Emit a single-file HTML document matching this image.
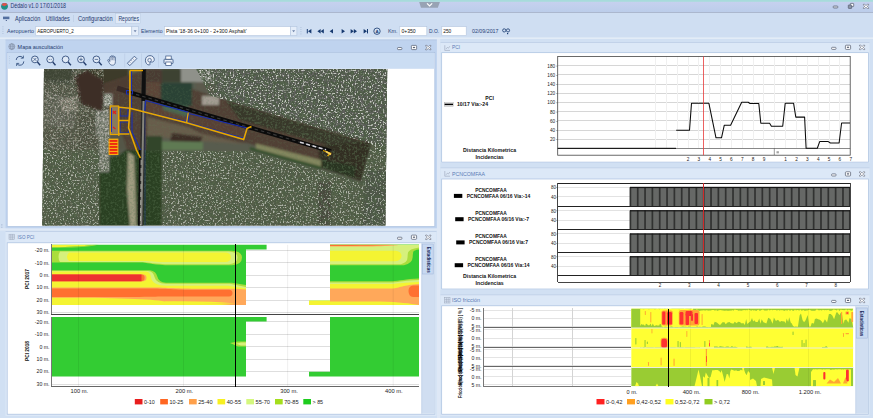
<!DOCTYPE html><html><head><meta charset="utf-8"><title>Dédalo v1.0 17/01/2018</title>
<style>html,body{margin:0;padding:0;background:#d3e1f3;overflow:hidden}svg{display:block}text{font-family:"Liberation Sans", sans-serif}</style></head><body>
<svg width="873" height="418" viewBox="0 0 873 418">
<rect x="0" y="0" width="873" height="418" fill="#d1e0f3"/>
<rect x="0" y="0" width="873" height="1.900" fill="#a7dbdb"/>
<defs><linearGradient id="tg" x1="0" y1="0" x2="0" y2="1"><stop offset="0" stop-color="#c6d1ef"/><stop offset="1" stop-color="#bbcdea"/></linearGradient></defs>
<rect x="0" y="1.9" width="873" height="10.4" fill="url(#tg)"/>
<rect x="0" y="12" width="873" height="0.9" fill="#a3afc6"/>
<rect x="0" y="12.9" width="873" height="25.100" fill="#cfdef2"/>
<rect x="0" y="37.6" width="873" height="1" fill="#eef4fb"/>
<circle cx="4.5" cy="6.3" r="3.4" fill="#1f8f86"/><path d="M1.5 5 A3.4 3.4 0 0 1 7.6 4.6 L4.5 6.3Z" fill="#e0504a"/>
<text x="10.5" y="8.3" font-size="6.9" fill="#1e3a6e" textLength="55.5" lengthAdjust="spacingAndGlyphs">Dédalo v1.0 17/01/2018</text>
<path d="M419.2 2 L439.9 2 L437.8 7.7 L421 7.7 Z" fill="#98a3b4"/><path d="M427 3.300 L429.600 5.900 L432.200 3.300" fill="none" stroke="#fff" stroke-width="1.200"/>
<rect x="3" y="16.6" width="6.4" height="2.6" fill="#5470a0"/><rect x="5.8" y="20" width="1" height="1" fill="#3a5080"/>
<rect x="115.5" y="13.6" width="25" height="10" fill="#dfe9f7" stroke="#b8c9e2" stroke-width="0.5"/>
<text x="15.1" y="20.9" font-size="6.8" fill="#1e3a6e" textLength="25.2" lengthAdjust="spacingAndGlyphs">Aplicación</text>
<text x="45.8" y="20.9" font-size="6.8" fill="#1e3a6e" textLength="24" lengthAdjust="spacingAndGlyphs">Utilidades</text>
<text x="78" y="20.9" font-size="6.8" fill="#1e3a6e" textLength="34.6" lengthAdjust="spacingAndGlyphs">Configuración</text>
<text x="118.4" y="20.9" font-size="6.8" fill="#1e3a6e" textLength="20.6" lengthAdjust="spacingAndGlyphs">Reportes</text>
<rect x="73.3" y="15" width="0.5" height="7" fill="#b5c6de"/>
<rect x="2.6" y="26.5" width="0.7" height="0.7" fill="#8fa3c4"/>
<rect x="2.6" y="28.7" width="0.7" height="0.7" fill="#8fa3c4"/>
<rect x="2.6" y="30.9" width="0.7" height="0.7" fill="#8fa3c4"/>
<rect x="2.6" y="33.1" width="0.7" height="0.7" fill="#8fa3c4"/>
<text x="7" y="33.4" font-size="6.1" fill="#2b4478" textLength="27" lengthAdjust="spacingAndGlyphs">Aeropuerto</text>
<rect x="35.8" y="26.6" width="96" height="9" fill="#fff" stroke="#b4c5de" stroke-width="0.6"/>
<rect x="131.8" y="26.6" width="6.6" height="9" fill="#e4edf9" stroke="#b4c5de" stroke-width="0.6"/><path d="M133.6 30.2 L136.6 30.2 L135.1 32.2Z" fill="#6f83a8"/>
<text x="37.3" y="33.3" font-size="6" fill="#111" textLength="36.5" lengthAdjust="spacingAndGlyphs">AEROPUERTO_2</text>
<text x="141" y="33.4" font-size="6.1" fill="#2b4478" textLength="21.5" lengthAdjust="spacingAndGlyphs">Elemento</text>
<rect x="164.3" y="26.6" width="126" height="9" fill="#fff" stroke="#b4c5de" stroke-width="0.6"/>
<rect x="290.3" y="26.6" width="6.6" height="9" fill="#e4edf9" stroke="#b4c5de" stroke-width="0.6"/><path d="M292.1 30.2 L295.1 30.2 L293.6 32.2Z" fill="#6f83a8"/>
<text x="166" y="33.3" font-size="5.900" fill="#111" textLength="80.7" lengthAdjust="spacingAndGlyphs">Pista '18-36 0+100 - 2+300 Asphalt'</text>
<rect x="300.6" y="27.0" width="0.7" height="0.7" fill="#8fa3c4"/>
<rect x="300.6" y="29.2" width="0.7" height="0.7" fill="#8fa3c4"/>
<rect x="300.6" y="31.4" width="0.7" height="0.7" fill="#8fa3c4"/>
<rect x="300.6" y="33.6" width="0.7" height="0.7" fill="#8fa3c4"/>
<g fill="#16396f">
<rect x="306.8" y="29" width="1" height="4.4"/><path d="M311.4 29 L311.4 33.4 L308 31.2Z"/>
<path d="M320.6 29 L320.6 33.4 L317.4 31.2Z"/><path d="M323.8 29 L323.8 33.4 L320.6 31.2Z"/>
<path d="M333 29 L333 33.4 L329.6 31.2Z"/>
<path d="M341.6 29 L341.6 33.4 L345 31.2Z"/>
<path d="M350.6 29 L350.6 33.4 L353.8 31.2Z"/><path d="M353.8 29 L353.8 33.4 L357 31.2Z"/>
<path d="M363.6 29 L363.6 33.4 L367 31.2Z"/><rect x="367" y="29" width="1" height="4.4"/>
</g>
<circle cx="377" cy="31.2" r="3.2" fill="none" stroke="#16396f" stroke-width="0.8"/><text x="377" y="33" font-size="4.4" font-weight="bold" text-anchor="middle" fill="#16396f">A</text>
<text x="388" y="33.4" font-size="6.1" fill="#2b4478" textLength="9.6" lengthAdjust="spacingAndGlyphs">Km.</text>
<rect x="399.8" y="26.6" width="27" height="9" fill="#fff" stroke="#b4c5de" stroke-width="0.6"/><text x="401.4" y="33.3" font-size="6" fill="#111" textLength="14.3" lengthAdjust="spacingAndGlyphs">0+350</text>
<text x="429" y="33.4" font-size="6.1" fill="#2b4478" textLength="10.2" lengthAdjust="spacingAndGlyphs">D.O.</text>
<rect x="441.8" y="26.6" width="24.4" height="9" fill="#fff" stroke="#b4c5de" stroke-width="0.6"/><text x="443.2" y="33.3" font-size="6" fill="#111" textLength="8.1" lengthAdjust="spacingAndGlyphs">250</text>
<text x="472" y="33.3" font-size="6" fill="#2b4478" textLength="26.5" lengthAdjust="spacingAndGlyphs">02/09/2017</text>
<g fill="none" stroke="#16396f" stroke-width="0.8"><circle cx="504.2" cy="30.4" r="1.6"/><circle cx="508" cy="30.4" r="1.6"/></g><rect x="507" y="33" width="1.2" height="1.2" fill="#16396f"/>
<g fill="#fff" stroke="#5a6274" stroke-width="0.75">
<rect x="833.2" y="6" width="4.600" height="2" rx="0.700" fill="#d8dde6"/>
<rect x="850.3" y="3.4" width="3.4" height="3.2" rx="0.5"/><rect x="848.300" y="5" width="3.400" height="3.400" rx="0.500" fill="#8d96a8"/>
<path d="M863.4 4.3l1.1 0 1.5 1.2 1.5-1.2 1.1 0 0 0.9-1.5 1.2 1.5 1.200 0 0.900-1.100 0-1.500-1.200-1.500 1.200-1.100 0 0-0.900 1.500-1.200-1.500-1.200z" stroke-width="0.600"/>
</g>
<rect x="437" y="39" width="3.2" height="379" fill="#dee8f6"/><rect x="0" y="228.2" width="437" height="2.4" fill="#dee8f6"/>
<rect x="5.5" y="39.7" width="431.3" height="188.5" fill="#bfd3ef"/>
<rect x="5.5" y="39.7" width="431.3" height="0.7" fill="#b7c9e3"/>
<text x="17.6" y="48.6" font-size="6.2" fill="#1e3a6e" textLength="45.4" lengthAdjust="spacingAndGlyphs">Mapa auscultación</text>
<rect x="7.2" y="52.6" width="427.6" height="174" fill="#fff" stroke="#a9bfdf" stroke-width="0.7"/>
<rect x="7.6" y="53" width="426.8" height="15.8" fill="#cbddf3"/>
<g fill="none" stroke="#7d8aa0" stroke-width="0.6"><circle cx="11.8" cy="46.6" r="3"/><ellipse cx="11.8" cy="46.6" rx="1.3" ry="3"/><path d="M8.8 46.6h6M9.3 45h5M9.3 48.2h5"/></g>
<g fill="#fff" stroke="#5a6274" stroke-width="0.75">
<rect x="397.50" y="47.50" width="4.4" height="2.1" rx="0.7"/>
<rect x="411.40" y="45.40" width="5.2" height="4.2" rx="0.8"/><rect x="412.90" y="46.90" width="2.2" height="1.2" fill="#5a6274" stroke="none"/>
<path d="M425.70 45.40l1.1 0 1.5 1.3 1.5-1.3 1.1 0 0 0.9-1.5 1.3 1.5 1.3 0 0.9-1.1 0-1.5-1.3-1.5 1.3-1.1 0 0-0.9 1.5-1.3-1.5-1.3z" stroke-width="0.6"/>
</g>
<g fill="none" stroke="#34507f" stroke-width="0.9">
<rect x="9.4" y="56.0" width="0.5" height="0.5" fill="#8fa3c4" stroke="none"/>
<rect x="9.4" y="58.3" width="0.5" height="0.5" fill="#8fa3c4" stroke="none"/>
<rect x="9.4" y="60.6" width="0.5" height="0.5" fill="#8fa3c4" stroke="none"/>
<rect x="9.4" y="62.9" width="0.5" height="0.5" fill="#8fa3c4" stroke="none"/>
<path d="M16.2 60a3.800 3.800 0 0 1 6.800-2.200M23.800 61.400a3.800 3.800 0 0 1-6.800 2.400"/><path d="M23.400 55.600v2.600h-2.600M16.600 66v-2.600h2.600" stroke-width="0.8"/>
<circle cx="34.9" cy="59.400" r="3.400" fill="#dfe9f6"/><path d="M37.4 62l2.800 3.200" stroke-width="1.400" stroke="#27406f"/>
<circle cx="50.2" cy="59.400" r="3.400" fill="#dfe9f6"/><path d="M52.7 62l2.800 3.200" stroke-width="1.400" stroke="#27406f"/>
<circle cx="65.6" cy="59.400" r="3.400" fill="#dfe9f6"/><path d="M68.1 62l2.800 3.200" stroke-width="1.400" stroke="#27406f"/>
<circle cx="81" cy="59.400" r="3.400" fill="#dfe9f6"/><path d="M83.5 62l2.800 3.200" stroke-width="1.400" stroke="#27406f"/>
<circle cx="96.4" cy="59.400" r="3.400" fill="#dfe9f6"/><path d="M98.9 62l2.800 3.200" stroke-width="1.400" stroke="#27406f"/>
<path d="M33.400 57.900l3 3M36.400 57.900l-3 3" stroke-width="0.7"/>
<path d="M48.800 59.400h0.800M50.800 59.400h0.800" stroke-width="0.9"/>
<path d="M79.300 59.400h3.400M81 57.700v3.400" stroke-width="0.7"/>
<path d="M94.700 59.400h3.400" stroke-width="0.7"/>
<path d="M109.800 61.500v-4.200a0.700 0.700 0 0 1 1.400 0v-1a0.700 0.700 0 0 1 1.400 0v0.300a0.700 0.700 0 0 1 1.400 0v0.800a0.700 0.700 0 0 1 1.400 0v4.200c0 2.600-1.200 3.600-3 3.600s-2.400-0.800-3.400-2.600l-1.300-2.300a0.700 0.700 0 0 1 1.200-0.600z" stroke-width="0.7" fill="#e8eef8"/>
<path d="M111.200 57.300v3M112.600 56.600v3.600M114 57v3.400" stroke-width="0.5"/>
<rect x="124.600" y="53.500" width="0.500" height="14" fill="#b3c5df" stroke="none"/>
<path d="M127.400 63.200l7-7 2.400 2.400-7 7z" stroke-width="0.8" fill="#e8eef8"/><path d="M129.400 61.800l1 1M131 60.200l1 1M132.600 58.600l1 1" stroke-width="0.5"/>
<rect x="141.300" y="53.500" width="0.500" height="14" fill="#b3c5df" stroke="none"/>
<path d="M150 55.600c-2.800 0-4.600 2-4.600 4.600 0 2.600 1.600 4.800 3.700 4.800 1 0 1-0.800 0.800-1.600-0.200-1 0.600-1.600 1.600-1.400 1.600 0.300 2.800-0.800 2.800-2.500 0-2.200-1.900-3.900-4.300-3.900z" stroke-width="0.8" fill="#e8eef8"/><circle cx="149.600" cy="60.200" r="1.800" stroke-width="0.7"/>
<rect x="158.300" y="53.500" width="0.500" height="14" fill="#b3c5df" stroke="none"/>
<rect x="164" y="59.200" width="9" height="4.400" rx="0.700" stroke-width="0.8" fill="#e8eef8"/><rect x="165.800" y="56" width="5.400" height="3.200" stroke-width="0.700" fill="#fff"/><rect x="165.800" y="62" width="5.400" height="3.400" fill="#fff" stroke-width="0.700"/>
</g>
<defs>
<clipPath id="mapclip"><path d="M44 69H387.200L385.400 225.500H42.200Z"/></clipPath>
<filter id="nzW" x="0" y="0" width="100%" height="100%"><feTurbulence type="fractalNoise" baseFrequency="0.6" numOctaves="2" seed="3"/><feColorMatrix values="0 0 0 0 0.88  0 0 0 0 0.88  0 0 0 0 0.85  6 0 0 0 -3.3"/></filter>
<filter id="nzB" x="0" y="0" width="100%" height="100%"><feTurbulence type="fractalNoise" baseFrequency="0.55" numOctaves="2" seed="8"/><feColorMatrix values="0 0 0 0 0.07  0 0 0 0 0.1  0 0 0 0 0.06  0 6 0 0 -2.6"/></filter>
<filter id="nzG" x="0" y="0" width="100%" height="100%"><feTurbulence type="fractalNoise" baseFrequency="0.45" numOctaves="2" seed="5"/><feColorMatrix values="0 0 0 0 0.12  0 0 0 0 0.2  0 0 0 0 0.1  0 0 4 0 -1.8"/></filter>
<filter id="nzL" x="0" y="0" width="100%" height="100%"><feTurbulence type="fractalNoise" baseFrequency="0.4" numOctaves="2" seed="15"/><feColorMatrix values="0 0 0 0 0.75  0 0 0 0 0.72  0 0 0 0 0.6  0 0 4 0 -2.0"/></filter>
<filter id="nzD" x="0" y="0" width="100%" height="100%"><feTurbulence type="fractalNoise" baseFrequency="0.22" numOctaves="2" seed="21"/><feColorMatrix values="0 0 0 0 0.08  0 0 0 0 0.13  0 0 0 0 0.06  6 0 0 0 -2.7"/></filter>
<filter id="blur1"><feGaussianBlur stdDeviation="1.1"/></filter>
<filter id="blur2"><feGaussianBlur stdDeviation="0.5"/></filter>
<clipPath id="urbN"><path d="M196 69H388V160L370 143.500L210 95.500Z"/></clipPath>
<clipPath id="urbS"><path d="M42 150H99V226H42ZM162 151L250 151L320 170L361 182L372 142L388 150V226H162Z"/></clipPath>
<clipPath id="urbW"><path d="M42 69H104V94H112V106H109V172H99V150H42Z"/></clipPath>
<clipPath id="forest"><path d="M99 172L104 158L118 156L126 150L162 150V226H99ZM226 101L371 144L368 158L330 146L240 120ZM322 150L370 146L366 178H322Z"/></clipPath>
<clipPath id="airp"><path d="M104 84L128 76L146 69L160 69L160 82L195 90L210 95L371 142L361 181L320 167L248 143L150 136L146 152L128 152L120 128L108 126Z"/></clipPath>
</defs>
<g clip-path="url(#mapclip)">
<rect x="40" y="68" width="350" height="160" fill="#585c4e"/>
<g filter="url(#blur1)">
<path d="M42 69H128V150H42Z" fill="#545647"/>
<path d="M44 69H74L72 84L44 82Z" fill="#42463a"/>
<path d="M74 76L86 70L104 82L102 112L80 104Z" fill="#3e2f27"/>
<path d="M86 69H128V78L104 84Z" fill="#3d3a2c"/>
<path d="M46 92L78 100L74 128L44 126Z" fill="#66655a"/>
<path d="M60 100L76 96L78 110L62 112Z" fill="#8a8478"/>
<path d="M78 112L100 116V150H78Z" fill="#50503f"/>
<path d="M196 66H390V158L370 143.500L210 95.500Z" fill="#5f615b"/>
<path d="M180 66H212V82H180Z" fill="#8f918a"/>
<path d="M196 82H215V94L196 90Z" fill="#5b5a4e"/>
<path d="M104 84L128 76L146 69L160 69L160 82L195 90L210 95L371 142L361 181L320 167L248 143L150 136L146 152L128 152L120 128L108 126Z" fill="#513f34"/>
<path d="M145.800 100.500L188 112.200L186 121.600L144.600 112Z" fill="#5c4336"/>
<path d="M189 113.500L246.800 128L243.700 138.200L188 122.600Z" fill="#584035"/>
<path d="M226 101L371 144L368 158L330 146L240 120Z" fill="#37382a"/>
<path d="M161 82.500H192V106H161Z" fill="#2c4235"/>
<path d="M163 106H188V117L163 110Z" fill="#486650"/>
<path d="M146 70H162V84H146Z" fill="#4a3a30"/><path d="M162 69H181V82H162Z" fill="#3c4232"/>
<path d="M146 82H160V98L146 94Z" fill="#5b4538"/>
<path d="M147 117L188 127L200 133L246 144L200 141L147 136Z" fill="#685d4b"/>
<path d="M172 133L203 137L200 142L170 141Z" fill="#3d2d27"/>
<path d="M318 146L371 142L361 181L320 167Z" fill="#332d23"/>
<path d="M322 160L356 166L354 178L322 168Z" fill="#2b3421"/>
<path d="M147 141L203 142L203 150L147 150Z" fill="#5f7a52"/>
<path d="M256 143.500L321 160V166.500L256 148.500Z" fill="#84875f"/>
<path d="M250 147L321 166.500L321 169.500L250 150Z" fill="#33502c"/>
<path d="M99 172L104 158L118 156L126 150L162 150V226H99Z" fill="#2b3f23"/>
<path d="M85 152H100V172H85Z" fill="#3a5030"/>
<path d="M146 136H162V152H146Z" fill="#33452a"/>
<path d="M128 152L134 156L135.500 190L136.500 226H130L127 190Z" fill="#a09c80"/>
<path d="M42 150H99V226H42Z" fill="#59604c"/>
<path d="M162 151L250 151L320 170L361 182L372 142L388 150V226H162Z" fill="#58614c"/>
<path d="M318 182H331V226H318Z" fill="#4a473e"/>
<path d="M366 170H388V226H362Z" fill="#50544a"/>
<path d="M104 94H112V106H104Z" fill="#a8a9a0"/>
<path d="M96 110H109V136H96Z" fill="#8c8d84"/>
<path d="M99 136H109V172H99Z" fill="#85887d"/>
<path d="M202 96H219V105H202Z" fill="#a39c92"/>
</g>
<g clip-path="url(#forest)"><rect x="40" y="68" width="350" height="160" filter="url(#nzG)" opacity="0.32"/></g>
<g clip-path="url(#airp)"><rect x="100" y="68" width="280" height="115" filter="url(#nzG)" opacity="0.18"/></g>
<g clip-path="url(#urbN)"><rect x="190" y="66" width="200" height="100" filter="url(#nzD)" opacity="0.7"/></g>
<g clip-path="url(#urbS)"><rect x="40" y="148" width="350" height="80" filter="url(#nzD)" opacity="0.6"/></g>
<g clip-path="url(#urbN)"><rect x="190" y="66" width="200" height="100" filter="url(#nzB)" opacity="0.95"/><rect x="190" y="66" width="200" height="100" filter="url(#nzW)" opacity="0.72"/></g>
<g clip-path="url(#urbS)"><rect x="40" y="148" width="350" height="80" filter="url(#nzB)" opacity="0.7"/><rect x="40" y="148" width="350" height="80" filter="url(#nzW)" opacity="0.58"/></g>
<g clip-path="url(#urbW)"><rect x="40" y="68" width="80" height="106" filter="url(#nzB)" opacity="0.6"/><rect x="40" y="68" width="80" height="106" filter="url(#nzW)" opacity="0.4"/><rect x="40" y="68" width="80" height="106" filter="url(#nzL)" opacity="0.35"/></g>
<g filter="url(#blur1)"><path d="M76 78L87 71L103 80L102 111L82 103Z" fill="#3e2f27"/>
<path d="M104 84L118 80L128 76V88L118 86L104 92Z" fill="#4e3d33"/>
<path d="M44 69H72L70 80L44 80Z" fill="#3f4435" opacity="0.8"/></g>
<path d="M144 69.500L141 226" stroke="#2a2a28" stroke-width="4.400" fill="none"/>
<path d="M144.200 69.500L141.200 226" stroke="#85857c" stroke-width="2" fill="none"/>
<path d="M144 69.500L143.400 101" stroke="#101010" stroke-width="3.600" fill="none"/>
<path d="M139.800 150L138.700 226" stroke="#0c0c0c" stroke-width="1.400" fill="none"/>
<path d="M141.200 160L140.400 226" stroke="#c9c9c0" stroke-width="0.700" stroke-dasharray="5 3" fill="none"/>
<path d="M117 88L131 92.500" stroke="#382a26" stroke-width="5.500" fill="none"/>
<path d="M131 92.900L331 151.200" stroke="#0b0b0b" stroke-width="4.300" fill="none"/>
<path d="M136 94.400L331 151.200" stroke="#9a9a9a" stroke-width="1.100" stroke-dasharray="3.500 3" fill="none" opacity="0.32"/>
<path d="M300 142.200L326 149.800" stroke="#e8e8f0" stroke-width="1.600" stroke-dasharray="4 2.500" fill="none" opacity="0.9"/>
<g fill="none" stroke="#1a2fb0" stroke-width="1.100">
<path d="M145.800 100.500L188 112.200L186 121.600L144.600 112Z"/>
<path d="M189 113.500L246.800 128L243.700 138.200L188 122.600Z"/>
<path d="M131.500 70.500L131.500 90M131.500 96V108M132 112L132 132L140.500 150"/>
<path d="M120 108H128V116H120ZM120 122H128.500V133H120Z"/>
<path d="M145 101V226" stroke-width="0.600" opacity="0.700"/>
<path d="M126.500 90.500H132.500V94H126.500Z"/>
</g>
<g fill="none" stroke="#e8a800" stroke-width="1.600" stroke-linejoin="round">
<path d="M129.900 70.500V108.300M129.900 70.500H143"/>
<path d="M110.500 106.500L129.900 108.300L186.600 122.700L243.700 139.600L247 128.500L251.500 126.600"/>
<path d="M188.200 112.600L186.600 122.700" stroke-width="1.300"/>
<path d="M129.900 108.300L128.600 128L136.500 150L140.400 158"/>
<path d="M119 120.500H128.900M119 134H129.500" stroke-width="1.300"/>
<path d="M118.800 106.500V136" stroke-width="1.300"/>
</g>
<rect x="110.300" y="106" width="8.200" height="28.500" fill="#8a7a5c" stroke="#e8a800" stroke-width="1.200"/>
<path d="M111.500 108V132" stroke="#2030c0" stroke-width="1" fill="none"/>
<path d="M113 111l3 3M113 113.500l3-2.500M113 127l2.500 2" stroke="#e02020" stroke-width="1.100" fill="none"/>
<rect x="108.600" y="138.600" width="9.800" height="16.400" fill="#f6b010"/>
<rect x="109.600" y="140.0" width="7.800" height="1.900" fill="#ee2a10"/>
<rect x="109.600" y="143.0" width="7.800" height="1.900" fill="#ee2a10"/>
<rect x="109.600" y="146.0" width="7.800" height="1.900" fill="#ee2a10"/>
<rect x="109.600" y="149.0" width="7.800" height="1.900" fill="#ee2a10"/>
<rect x="109.600" y="152.0" width="7.800" height="1.900" fill="#ee2a10"/>
<path d="M323 150.500L330.500 153.200L327.500 156" stroke="#e8a800" stroke-width="1.200" fill="none"/>
<path d="M326 151.500L331 154.500" stroke="#f5d060" stroke-width="1.600" fill="none"/>
</g>
<rect x="1.6" y="224.0" width="0.6" height="0.6" fill="#6f83a8"/>
<rect x="1.6" y="225.6" width="0.6" height="0.6" fill="#6f83a8"/>
<rect x="1.6" y="227.2" width="0.6" height="0.6" fill="#6f83a8"/>
<rect x="5.5" y="231" width="431" height="185" fill="#dce8f7"/>
<rect x="5.5" y="231" width="431" height="0.7" fill="#b7c9e3"/>
<text x="17.6" y="238.9" font-size="6.0" fill="#5a7bb5" textLength="16.7" lengthAdjust="spacingAndGlyphs">ISO PCI</text>
<rect x="7.2" y="242.8" width="427.6" height="171.4" fill="#fff" stroke="#a9bfdf" stroke-width="0.7"/>
<g fill="none" stroke="#9aa5b8" stroke-width="0.5"><rect x="9" y="234.200" width="5.400" height="5.400"/><path d="M9 236h5.400M9 237.800h5.400M10.800 234.200v5.400M12.600 234.200v5.400"/></g>
<g fill="#fff" stroke="#5a6274" stroke-width="0.75">
<rect x="397.50" y="237.20" width="4.4" height="2.1" rx="0.7"/>
<rect x="411.40" y="235.10" width="5.2" height="4.2" rx="0.8"/><rect x="412.90" y="236.60" width="2.2" height="1.2" fill="#5a6274" stroke="none"/>
<path d="M425.70 235.10l1.1 0 1.5 1.3 1.5-1.3 1.1 0 0 0.9-1.5 1.3 1.5 1.3 0 0.9-1.1 0-1.5-1.3-1.5 1.3-1.1 0 0-0.9 1.5-1.3-1.5-1.3z" stroke-width="0.6"/>
</g>
<g shape-rendering="crispEdges">
<rect x="52" y="250" width="367" height="1" fill="#dedede"/>
<rect x="52" y="262" width="367" height="1" fill="#dedede"/>
<rect x="52" y="275" width="367" height="1" fill="#dedede"/>
<rect x="52" y="287" width="367" height="1" fill="#dedede"/>
<rect x="52" y="300" width="367" height="1" fill="#dedede"/>
<rect x="52" y="312" width="367" height="1" fill="#dedede"/>
<rect x="52" y="321" width="367" height="1" fill="#dedede"/>
<rect x="52" y="334" width="367" height="1" fill="#dedede"/>
<rect x="52" y="346" width="367" height="1" fill="#dedede"/>
<rect x="52" y="359" width="367" height="1" fill="#dedede"/>
<rect x="52" y="371" width="367" height="1" fill="#dedede"/>
<rect x="52" y="384" width="367" height="1" fill="#dedede"/>
</g>
<defs><clipPath id="c1"><path d="M52 244.8H266.6V249.6H246V305H52ZM330 244.8H419V305H309V300H330Z"/></clipPath>
<clipPath id="c2"><path d="M52 317H266.6V321.6H246V376.5H52ZM330 317H419V376.5H309V371.8H330Z"/></clipPath></defs>
<g clip-path="url(#c1)">
<rect x="52" y="244" width="370" height="62" fill="#33cc33"/>
<path d="M52 244.500H95C85 246.600 70 247 52 247Z" fill="#f4f432"/>
<path d="M52 247C70 247 85 246.600 95 244.500L99 244.500C88 247.400 70 247.700 52 247.700Z" fill="#aadd3c"/>
<path d="M52 250.800H232Q242 251.500 242 257.500Q242 264.800 232 265.200H165C150 264.500 148 262.600 140 262.600H52Z" fill="#aadd3c"/>
<path d="M60 251.600H229Q237.500 252.200 237.500 257.500Q237.500 263.600 229 264.200H165C150 263.400 148 262 140 262H60Q57 257 60 251.600Z" fill="#d6f07c"/>
<path d="M69 252.600H225Q231 253 231 257.400Q231 261.600 225 262H160C150 261.400 148 261 140 261H69Q65 257 69 252.600Z" fill="#f4f432"/>
<path d="M52 270.300H150Q156 271 157.500 277Q158.500 282 166 282.800H232L246 285V306H52Z" fill="#aadd3c"/>
<path d="M52 270.900H148Q153.500 271.500 154.500 277Q156 283.200 166 283.800H230L246 287V306H52Z" fill="#d6f07c"/>
<path d="M52 271.500H146Q150.500 272 151 277.500Q152.500 285.500 166 285.800H228L246 288.500V306H52Z" fill="#f4f432"/>
<path d="M52 274.400H143.500Q146.500 274.600 146.500 277.800Q146.500 281 143.500 281.200H52Z" fill="#ffa85a"/>
<path d="M52 274.400H142Q144.600 274.600 144.600 277.800Q144.600 281 142 281.200H52Z" fill="#ff7030"/>
<path d="M52 274.400H141.500V281.200H52Z" fill="#ee3030"/>
<path d="M52 287.600H150C170 287.600 175 288.800 200 288.800H236L246 289.500V305.500H236C215 303 190 302.500 165 301.500C150 299 120 297.800 52 297.800Z" fill="#ffa85a"/>
<path d="M52 288.400H150C170 288.400 175 289.800 200 289.800H229Q232.500 290 232.500 293.200Q232.500 296.300 229 296.500H160C150 297 120 297 52 297Z" fill="#ff7030"/>
<path d="M165 301.500C190 300.800 215 301.500 236 303.500C215 303.800 190 303.500 165 304.800Z" fill="#f4f432"/>
<rect x="330" y="244" width="90" height="62" fill="#33cc33"/>
<path d="M330 244.500H419V249.500Q414 250 413.200 252Q412.700 255 412.700 257Q412.500 263.500 404 265.200H330Z" fill="#aadd3c"/>
<path d="M330 244.500H419V247.500Q409 249 408 252.500Q407.600 255 407.600 257Q407.600 262.500 401 264.200H330Z" fill="#d6f07c"/>
<path d="M330 250.700H395Q401.500 251.200 401.500 256Q401.500 260.600 395 261.200H330Z" fill="#f4f432"/>
<path d="M330 244.500H402C390 246.600 370 246.600 330 246.600Z" fill="#ffa85a"/>
<path d="M330 244.500H394C380 245.900 360 245.900 330 245.900Z" fill="#ff7030"/>
<path d="M330 281.300H392C400 281 405 279 419 278.600V306H330Z" fill="#aadd3c"/>
<path d="M330 282.400H392C400 282 405 280.500 419 280V306H330Z" fill="#d6f07c"/>
<path d="M330 284H392C400 283.600 405 282.500 419 282V306H330Z" fill="#f4f432"/>
<path d="M330 288.500H392C400 288 403 285 419 284V306H330Z" fill="#ffa85a"/>
<path d="M419 285.500H413Q408.500 286 408.500 291Q408.500 296.500 413 297H419Z" fill="#ff7030"/>
<path d="M309 300H330V301.500H380C400 302 410 303.500 419 305H309Z" fill="#f4f432"/>
<path d="M309 300H330V301H309Z" fill="#d6f07c"/>
</g>
<g clip-path="url(#c2)"><rect x="52" y="316" width="370" height="62" fill="#33cc33"/>
<path d="M230 343L238 341.500H246V346.500H238Z" fill="#aadd3c"/><path d="M236 343.800L241 342.500H246V345.600H241Z" fill="#d6f07c"/>
</g>
<rect x="78.2" y="244.800" width="0.6" height="141.500" fill="#000" opacity="0.11"/>
<rect x="183.4" y="244.800" width="0.6" height="141.500" fill="#000" opacity="0.11"/>
<rect x="287.5" y="244.800" width="0.6" height="141.500" fill="#000" opacity="0.11"/>
<rect x="392.8" y="244.800" width="0.6" height="141.500" fill="#000" opacity="0.11"/>
<g shape-rendering="crispEdges"><rect x="51" y="244" width="1" height="70" fill="#777"/><rect x="51" y="314" width="368" height="1" fill="#444"/>
<rect x="51" y="317" width="1" height="70" fill="#777"/><rect x="51" y="386" width="368" height="1" fill="#666"/>
<rect x="235" y="244" width="1" height="143" fill="#000"/></g>
<text x="49.500" y="252.1" font-size="5.200" text-anchor="end" fill="#222">-20 m.</text>
<text x="49.500" y="323.6" font-size="5.200" text-anchor="end" fill="#222">-20 m.</text>
<text x="49.500" y="264.6" font-size="5.200" text-anchor="end" fill="#222">-10 m.</text>
<text x="49.500" y="336.1" font-size="5.200" text-anchor="end" fill="#222">-10 m.</text>
<text x="49.500" y="277.0" font-size="5.200" text-anchor="end" fill="#222">0 m.</text>
<text x="49.500" y="348.5" font-size="5.200" text-anchor="end" fill="#222">0 m.</text>
<text x="49.500" y="289.4" font-size="5.200" text-anchor="end" fill="#222">10 m.</text>
<text x="49.500" y="361.0" font-size="5.200" text-anchor="end" fill="#222">10 m.</text>
<text x="49.500" y="301.9" font-size="5.200" text-anchor="end" fill="#222">20 m.</text>
<text x="49.500" y="373.4" font-size="5.200" text-anchor="end" fill="#222">20 m.</text>
<text x="49.500" y="314.4" font-size="5.200" text-anchor="end" fill="#222">30 m.</text>
<text x="49.500" y="385.9" font-size="5.200" text-anchor="end" fill="#222">30 m.</text>
<text transform="translate(28.800 279) rotate(-90)" font-size="4.800" font-weight="bold" text-anchor="middle" fill="#111">PCI 2017</text>
<text transform="translate(28.800 351) rotate(-90)" font-size="4.800" font-weight="bold" text-anchor="middle" fill="#111">PCI 2018</text>
<text x="79.3" y="393.300" font-size="5.600" text-anchor="middle" fill="#222" textLength="17.600" lengthAdjust="spacingAndGlyphs">100 m.</text>
<text x="184.4" y="393.300" font-size="5.600" text-anchor="middle" fill="#222" textLength="17.600" lengthAdjust="spacingAndGlyphs">200 m.</text>
<text x="289" y="393.300" font-size="5.600" text-anchor="middle" fill="#222" textLength="17.600" lengthAdjust="spacingAndGlyphs">300 m.</text>
<text x="393.8" y="393.300" font-size="5.600" text-anchor="middle" fill="#222" textLength="17.600" lengthAdjust="spacingAndGlyphs">400 m.</text>
<rect x="134.8" y="399" width="7.700" height="5.400" fill="#e81e1e"/><text x="144.0" y="403.800" font-size="5.500" fill="#222" textLength="10.8" lengthAdjust="spacingAndGlyphs">0-10</text>
<rect x="160.2" y="399" width="7.700" height="5.400" fill="#ff6622"/><text x="169.39999999999998" y="403.800" font-size="5.500" fill="#222" textLength="13.8" lengthAdjust="spacingAndGlyphs">10-25</text>
<rect x="189" y="399" width="7.700" height="5.400" fill="#ffa04a"/><text x="198.2" y="403.800" font-size="5.500" fill="#222" textLength="14.5" lengthAdjust="spacingAndGlyphs">25-40</text>
<rect x="217.5" y="399" width="7.700" height="5.400" fill="#f7f020"/><text x="226.7" y="403.800" font-size="5.500" fill="#222" textLength="14.5" lengthAdjust="spacingAndGlyphs">40-55</text>
<rect x="246.3" y="399" width="7.700" height="5.400" fill="#d4f77e"/><text x="255.5" y="403.800" font-size="5.500" fill="#222" textLength="14.5" lengthAdjust="spacingAndGlyphs">55-70</text>
<rect x="275" y="399" width="7.700" height="5.400" fill="#a4de1c"/><text x="284.2" y="403.800" font-size="5.500" fill="#222" textLength="14.5" lengthAdjust="spacingAndGlyphs">70-85</text>
<rect x="303.3" y="399" width="7.700" height="5.400" fill="#1ecc1e"/><text x="312.5" y="403.800" font-size="5.500" fill="#222" textLength="10.6" lengthAdjust="spacingAndGlyphs">&gt; 85</text>
<rect x="421.700" y="243.200" width="12.800" height="170.600" fill="#d0def1"/><rect x="421.500" y="243.200" width="0.600" height="170.600" fill="#b4c7e3"/>
<rect x="422.500" y="244" width="10.700" height="30" fill="#c8d9f1" stroke="#a4badc" stroke-width="0.600"/>
<text transform="translate(426.900 259.800) rotate(90)" font-size="5.300" font-weight="bold" text-anchor="middle" fill="#1e2f5e" textLength="26" lengthAdjust="spacingAndGlyphs">Estadísticas</text>
<rect x="440.5" y="42" width="429" height="121" fill="#dce8f7"/>
<rect x="440.5" y="42" width="429" height="0.7" fill="#b7c9e3"/>
<text x="451.9" y="49.1" font-size="6.0" fill="#5a7bb5" textLength="8.1" lengthAdjust="spacingAndGlyphs">PCI</text>
<rect x="441.7" y="52.700" width="426.8" height="109.400" fill="#fff" stroke="#a9bfdf" stroke-width="0.7"/>
<path d="M444.800 45.200v5.200h5.200M446 49l1.300-1.600 1.200 0.800 1.300-2" fill="none" stroke="#9aa5b8" stroke-width="0.6"/>
<g fill="#fff" stroke="#5a6274" stroke-width="0.75">
<rect x="831.60" y="47.30" width="4.4" height="2.1" rx="0.7"/>
<rect x="845.40" y="45.20" width="5.2" height="4.2" rx="0.8"/><rect x="846.90" y="46.70" width="2.2" height="1.2" fill="#5a6274" stroke="none"/>
<path d="M859.50 45.20l1.1 0 1.5 1.3 1.5-1.3 1.1 0 0 0.9-1.5 1.3 1.5 1.3 0 0.9-1.1 0-1.5-1.3-1.5 1.3-1.1 0 0-0.9 1.5-1.3-1.5-1.3z" stroke-width="0.6"/>
</g>
<g shape-rendering="crispEdges">
<rect x="557.7" y="65" width="292.5" height="1" fill="#d6d6d6"/>
<rect x="557.7" y="74" width="292.5" height="1" fill="#d6d6d6"/>
<rect x="557.7" y="84" width="292.5" height="1" fill="#d6d6d6"/>
<rect x="557.7" y="93" width="292.5" height="1" fill="#d6d6d6"/>
<rect x="557.7" y="102" width="292.5" height="1" fill="#d6d6d6"/>
<rect x="557.7" y="111" width="292.5" height="1" fill="#d6d6d6"/>
<rect x="557.7" y="120" width="292.5" height="1" fill="#d6d6d6"/>
<rect x="557.7" y="130" width="292.5" height="1" fill="#d6d6d6"/>
<rect x="557.7" y="139" width="292.5" height="1" fill="#d6d6d6"/>
<rect x="655" y="56.4" width="1" height="92.0" fill="#f0f0f0"/>
<rect x="666" y="56.4" width="1" height="92.0" fill="#f0f0f0"/>
<rect x="677" y="56.4" width="1" height="92.0" fill="#f0f0f0"/>
<rect x="688" y="56.4" width="1" height="92.0" fill="#f0f0f0"/>
<rect x="698" y="56.4" width="1" height="92.0" fill="#f0f0f0"/>
<rect x="709" y="56.4" width="1" height="92.0" fill="#f0f0f0"/>
<rect x="720" y="56.4" width="1" height="92.0" fill="#f0f0f0"/>
<rect x="731" y="56.4" width="1" height="92.0" fill="#f0f0f0"/>
<rect x="742" y="56.4" width="1" height="92.0" fill="#f0f0f0"/>
<rect x="753" y="56.4" width="1" height="92.0" fill="#f0f0f0"/>
<rect x="763" y="56.4" width="1" height="92.0" fill="#f0f0f0"/>
<rect x="774" y="56.4" width="1" height="92.0" fill="#f0f0f0"/>
<rect x="785" y="56.4" width="1" height="92.0" fill="#f0f0f0"/>
<rect x="796" y="56.4" width="1" height="92.0" fill="#f0f0f0"/>
<rect x="807" y="56.4" width="1" height="92.0" fill="#f0f0f0"/>
<rect x="818" y="56.4" width="1" height="92.0" fill="#f0f0f0"/>
<rect x="829" y="56.4" width="1" height="92.0" fill="#f0f0f0"/>
<rect x="839" y="56.4" width="1" height="92.0" fill="#f0f0f0"/>
</g>
<rect x="557.7" y="56.4" width="292.5" height="98.8" fill="none" stroke="#444" stroke-width="0.8"/>
<rect x="557.7" y="148" width="292.5" height="0.7" fill="#555"/>
<rect x="557.7" y="147.800" width="118.3" height="1.100" fill="#111"/>
<path d="M774.300 148.400V155M776.500 151.800h2.400M776.500 152.800h2.400" stroke="#333" stroke-width="0.5" fill="none"/>
<polyline points="676.2,130.2 689.5,130.2 691.5,103.3 708.9,103.3 716.0,137.8 721.5,137.8 724.3,125.2 730.6,125.2 741.7,102.3 748.2,102.3 750.0,103.5 758.8,103.5 760.8,123.2 769.6,123.2 771.4,126.2 782.7,126.2 785.2,103.3 793.6,103.3 795.8,117.1 804.6,117.1 806.1,148.2 817.3,148.2 819.8,141.4 827.9,141.4 830.4,143.0 839.1,143.0 841.6,123.0 850.0,123.0" fill="none" stroke="#0a0a0a" stroke-width="1.050" stroke-linejoin="round"/>
<rect x="703" y="56.4" width="0.800" height="98.8" fill="#e83a3a"/>
<text x="555.200" y="67.5" font-size="4.700" text-anchor="end" fill="#222">180</text><rect x="556.300" y="65.8" width="1.400" height="0.500" fill="#444"/>
<text x="555.200" y="76.7" font-size="4.700" text-anchor="end" fill="#222">160</text><rect x="556.300" y="75.0" width="1.400" height="0.500" fill="#444"/>
<text x="555.200" y="85.9" font-size="4.700" text-anchor="end" fill="#222">140</text><rect x="556.300" y="84.2" width="1.400" height="0.500" fill="#444"/>
<text x="555.200" y="95.1" font-size="4.700" text-anchor="end" fill="#222">120</text><rect x="556.300" y="93.4" width="1.400" height="0.500" fill="#444"/>
<text x="555.200" y="104.3" font-size="4.700" text-anchor="end" fill="#222">100</text><rect x="556.300" y="102.6" width="1.400" height="0.500" fill="#444"/>
<text x="555.200" y="113.5" font-size="4.700" text-anchor="end" fill="#222">80</text><rect x="556.300" y="111.8" width="1.400" height="0.500" fill="#444"/>
<text x="555.200" y="122.7" font-size="4.700" text-anchor="end" fill="#222">60</text><rect x="556.300" y="121.0" width="1.400" height="0.500" fill="#444"/>
<text x="555.200" y="131.9" font-size="4.700" text-anchor="end" fill="#222">40</text><rect x="556.300" y="130.2" width="1.400" height="0.500" fill="#444"/>
<text x="555.200" y="141.1" font-size="4.700" text-anchor="end" fill="#222">20</text><rect x="556.300" y="139.4" width="1.400" height="0.500" fill="#444"/>
<text x="688.0" y="160.600" font-size="4.700" text-anchor="middle" fill="#222">2</text>
<text x="698.9" y="160.600" font-size="4.700" text-anchor="middle" fill="#222">3</text>
<text x="709.7" y="160.600" font-size="4.700" text-anchor="middle" fill="#222">4</text>
<text x="720.5" y="160.600" font-size="4.700" text-anchor="middle" fill="#222">5</text>
<text x="731.4" y="160.600" font-size="4.700" text-anchor="middle" fill="#222">6</text>
<text x="742.2" y="160.600" font-size="4.700" text-anchor="middle" fill="#222">7</text>
<text x="753.1" y="160.600" font-size="4.700" text-anchor="middle" fill="#222">8</text>
<text x="764.0" y="160.600" font-size="4.700" text-anchor="middle" fill="#222">9</text>
<text x="785.6" y="160.600" font-size="4.700" text-anchor="middle" fill="#222">1</text>
<text x="796.5" y="160.600" font-size="4.700" text-anchor="middle" fill="#222">2</text>
<text x="807.4" y="160.600" font-size="4.700" text-anchor="middle" fill="#222">3</text>
<text x="818.2" y="160.600" font-size="4.700" text-anchor="middle" fill="#222">4</text>
<text x="829.0" y="160.600" font-size="4.700" text-anchor="middle" fill="#222">5</text>
<text x="839.9" y="160.600" font-size="4.700" text-anchor="middle" fill="#222">6</text>
<text x="850.8" y="160.600" font-size="4.700" text-anchor="middle" fill="#222">7</text>
<text x="489.600" y="99.800" font-size="4.800" font-weight="bold" text-anchor="middle" fill="#111" textLength="8.500" lengthAdjust="spacingAndGlyphs">PCI</text>
<rect x="444.300" y="102.600" width="9" height="3.600" fill="#fff" stroke="#999" stroke-width="0.400"/><rect x="444.600" y="103.600" width="8.400" height="1.600" fill="#000"/>
<text x="457" y="106" font-size="4.800" font-weight="bold" fill="#111" textLength="31" lengthAdjust="spacingAndGlyphs">10/17 Vía:-24</text>
<text x="489.600" y="152" font-size="5" font-weight="bold" text-anchor="middle" fill="#111" textLength="53" lengthAdjust="spacingAndGlyphs">Distancia Kilometrica</text>
<text x="489.600" y="158.800" font-size="5" font-weight="bold" text-anchor="middle" fill="#111" textLength="28" lengthAdjust="spacingAndGlyphs">Incidencias</text>
<rect x="440.5" y="167.5" width="429" height="122.5" fill="#dce8f7"/>
<rect x="440.5" y="167.5" width="429" height="0.7" fill="#b7c9e3"/>
<text x="451.9" y="175.6" font-size="6.0" fill="#5a7bb5" textLength="33.2" lengthAdjust="spacingAndGlyphs">PCNCOMFAA</text>
<rect x="441.700" y="179" width="426.800" height="110" fill="#fff" stroke="#a9bfdf" stroke-width="0.700"/>
<path d="M444.800 171v5.200h5.200M446 174.800l1.300-1.600 1.200 0.800 1.300-2" fill="none" stroke="#9aa5b8" stroke-width="0.600"/>
<g fill="#fff" stroke="#5a6274" stroke-width="0.75">
<rect x="831.60" y="173.90" width="4.4" height="2.1" rx="0.7"/>
<rect x="845.40" y="171.80" width="5.2" height="4.2" rx="0.8"/><rect x="846.90" y="173.30" width="2.2" height="1.2" fill="#5a6274" stroke="none"/>
<path d="M859.50 171.80l1.1 0 1.5 1.3 1.5-1.3 1.1 0 0 0.9-1.5 1.3 1.5 1.3 0 0.9-1.1 0-1.5-1.3-1.5 1.3-1.1 0 0-0.9 1.5-1.3-1.5-1.3z" stroke-width="0.6"/>
</g>
<g shape-rendering="crispEdges">
<rect x="557.7" y="187" width="292.5" height="1" fill="#e2e2e2"/>
<rect x="557.7" y="196" width="292.5" height="1" fill="#e2e2e2"/>
<rect x="630" y="187.2" width="220.2" height="19.1" fill="#666866"/>
<rect x="557.7" y="210" width="292.5" height="1" fill="#e2e2e2"/>
<rect x="557.7" y="220" width="292.5" height="1" fill="#e2e2e2"/>
<rect x="630" y="210.5" width="220.2" height="19.0" fill="#666866"/>
<rect x="557.7" y="233" width="292.5" height="1" fill="#e2e2e2"/>
<rect x="557.7" y="243" width="292.5" height="1" fill="#e2e2e2"/>
<rect x="630" y="233.7" width="220.2" height="18.6" fill="#666866"/>
<rect x="557.7" y="256" width="292.5" height="1" fill="#e2e2e2"/>
<rect x="557.7" y="266" width="292.5" height="1" fill="#e2e2e2"/>
<rect x="630" y="256.5" width="220.2" height="18.6" fill="#666866"/>
</g>
<rect x="629.55" y="187.2" width="1.7" height="19.1" fill="#313231"/>
<rect x="636.88" y="187.2" width="1.7" height="19.1" fill="#313231"/>
<rect x="644.21" y="187.2" width="1.7" height="19.1" fill="#313231"/>
<rect x="651.54" y="187.2" width="1.7" height="19.1" fill="#313231"/>
<rect x="658.87" y="187.2" width="1.7" height="19.1" fill="#313231"/>
<rect x="666.20" y="187.2" width="1.7" height="19.1" fill="#313231"/>
<rect x="673.53" y="187.2" width="1.7" height="19.1" fill="#313231"/>
<rect x="680.86" y="187.2" width="1.7" height="19.1" fill="#313231"/>
<rect x="688.19" y="187.2" width="1.7" height="19.1" fill="#313231"/>
<rect x="695.52" y="187.2" width="1.7" height="19.1" fill="#313231"/>
<rect x="702.85" y="187.2" width="1.7" height="19.1" fill="#313231"/>
<rect x="710.18" y="187.2" width="1.7" height="19.1" fill="#313231"/>
<rect x="717.51" y="187.2" width="1.7" height="19.1" fill="#313231"/>
<rect x="724.84" y="187.2" width="1.7" height="19.1" fill="#313231"/>
<rect x="732.17" y="187.2" width="1.7" height="19.1" fill="#313231"/>
<rect x="739.50" y="187.2" width="1.7" height="19.1" fill="#313231"/>
<rect x="746.83" y="187.2" width="1.7" height="19.1" fill="#313231"/>
<rect x="754.16" y="187.2" width="1.7" height="19.1" fill="#313231"/>
<rect x="761.49" y="187.2" width="1.7" height="19.1" fill="#313231"/>
<rect x="768.82" y="187.2" width="1.7" height="19.1" fill="#313231"/>
<rect x="776.15" y="187.2" width="1.7" height="19.1" fill="#313231"/>
<rect x="783.48" y="187.2" width="1.7" height="19.1" fill="#313231"/>
<rect x="790.81" y="187.2" width="1.7" height="19.1" fill="#313231"/>
<rect x="798.14" y="187.2" width="1.7" height="19.1" fill="#313231"/>
<rect x="805.47" y="187.2" width="1.7" height="19.1" fill="#313231"/>
<rect x="812.80" y="187.2" width="1.7" height="19.1" fill="#313231"/>
<rect x="820.13" y="187.2" width="1.7" height="19.1" fill="#313231"/>
<rect x="827.46" y="187.2" width="1.7" height="19.1" fill="#313231"/>
<rect x="834.79" y="187.2" width="1.7" height="19.1" fill="#313231"/>
<rect x="842.12" y="187.2" width="1.7" height="19.1" fill="#313231"/>
<rect x="848.95" y="187.2" width="1.7" height="19.1" fill="#313231"/>
<rect x="630" y="186.8" width="220.2" height="1.3" fill="#151515"/>
<rect x="629.55" y="210.5" width="1.7" height="19.0" fill="#313231"/>
<rect x="636.88" y="210.5" width="1.7" height="19.0" fill="#313231"/>
<rect x="644.21" y="210.5" width="1.7" height="19.0" fill="#313231"/>
<rect x="651.54" y="210.5" width="1.7" height="19.0" fill="#313231"/>
<rect x="658.87" y="210.5" width="1.7" height="19.0" fill="#313231"/>
<rect x="666.20" y="210.5" width="1.7" height="19.0" fill="#313231"/>
<rect x="673.53" y="210.5" width="1.7" height="19.0" fill="#313231"/>
<rect x="680.86" y="210.5" width="1.7" height="19.0" fill="#313231"/>
<rect x="688.19" y="210.5" width="1.7" height="19.0" fill="#313231"/>
<rect x="695.52" y="210.5" width="1.7" height="19.0" fill="#313231"/>
<rect x="702.85" y="210.5" width="1.7" height="19.0" fill="#313231"/>
<rect x="710.18" y="210.5" width="1.7" height="19.0" fill="#313231"/>
<rect x="717.51" y="210.5" width="1.7" height="19.0" fill="#313231"/>
<rect x="724.84" y="210.5" width="1.7" height="19.0" fill="#313231"/>
<rect x="732.17" y="210.5" width="1.7" height="19.0" fill="#313231"/>
<rect x="739.50" y="210.5" width="1.7" height="19.0" fill="#313231"/>
<rect x="746.83" y="210.5" width="1.7" height="19.0" fill="#313231"/>
<rect x="754.16" y="210.5" width="1.7" height="19.0" fill="#313231"/>
<rect x="761.49" y="210.5" width="1.7" height="19.0" fill="#313231"/>
<rect x="768.82" y="210.5" width="1.7" height="19.0" fill="#313231"/>
<rect x="776.15" y="210.5" width="1.7" height="19.0" fill="#313231"/>
<rect x="783.48" y="210.5" width="1.7" height="19.0" fill="#313231"/>
<rect x="790.81" y="210.5" width="1.7" height="19.0" fill="#313231"/>
<rect x="798.14" y="210.5" width="1.7" height="19.0" fill="#313231"/>
<rect x="805.47" y="210.5" width="1.7" height="19.0" fill="#313231"/>
<rect x="812.80" y="210.5" width="1.7" height="19.0" fill="#313231"/>
<rect x="820.13" y="210.5" width="1.7" height="19.0" fill="#313231"/>
<rect x="827.46" y="210.5" width="1.7" height="19.0" fill="#313231"/>
<rect x="834.79" y="210.5" width="1.7" height="19.0" fill="#313231"/>
<rect x="842.12" y="210.5" width="1.7" height="19.0" fill="#313231"/>
<rect x="848.95" y="210.5" width="1.7" height="19.0" fill="#313231"/>
<rect x="630" y="210.1" width="220.2" height="1.3" fill="#151515"/>
<rect x="629.55" y="233.7" width="1.7" height="18.6" fill="#313231"/>
<rect x="636.88" y="233.7" width="1.7" height="18.6" fill="#313231"/>
<rect x="644.21" y="233.7" width="1.7" height="18.6" fill="#313231"/>
<rect x="651.54" y="233.7" width="1.7" height="18.6" fill="#313231"/>
<rect x="658.87" y="233.7" width="1.7" height="18.6" fill="#313231"/>
<rect x="666.20" y="233.7" width="1.7" height="18.6" fill="#313231"/>
<rect x="673.53" y="233.7" width="1.7" height="18.6" fill="#313231"/>
<rect x="680.86" y="233.7" width="1.7" height="18.6" fill="#313231"/>
<rect x="688.19" y="233.7" width="1.7" height="18.6" fill="#313231"/>
<rect x="695.52" y="233.7" width="1.7" height="18.6" fill="#313231"/>
<rect x="702.85" y="233.7" width="1.7" height="18.6" fill="#313231"/>
<rect x="710.18" y="233.7" width="1.7" height="18.6" fill="#313231"/>
<rect x="717.51" y="233.7" width="1.7" height="18.6" fill="#313231"/>
<rect x="724.84" y="233.7" width="1.7" height="18.6" fill="#313231"/>
<rect x="732.17" y="233.7" width="1.7" height="18.6" fill="#313231"/>
<rect x="739.50" y="233.7" width="1.7" height="18.6" fill="#313231"/>
<rect x="746.83" y="233.7" width="1.7" height="18.6" fill="#313231"/>
<rect x="754.16" y="233.7" width="1.7" height="18.6" fill="#313231"/>
<rect x="761.49" y="233.7" width="1.7" height="18.6" fill="#313231"/>
<rect x="768.82" y="233.7" width="1.7" height="18.6" fill="#313231"/>
<rect x="776.15" y="233.7" width="1.7" height="18.6" fill="#313231"/>
<rect x="783.48" y="233.7" width="1.7" height="18.6" fill="#313231"/>
<rect x="790.81" y="233.7" width="1.7" height="18.6" fill="#313231"/>
<rect x="798.14" y="233.7" width="1.7" height="18.6" fill="#313231"/>
<rect x="805.47" y="233.7" width="1.7" height="18.6" fill="#313231"/>
<rect x="812.80" y="233.7" width="1.7" height="18.6" fill="#313231"/>
<rect x="820.13" y="233.7" width="1.7" height="18.6" fill="#313231"/>
<rect x="827.46" y="233.7" width="1.7" height="18.6" fill="#313231"/>
<rect x="834.79" y="233.7" width="1.7" height="18.6" fill="#313231"/>
<rect x="842.12" y="233.7" width="1.7" height="18.6" fill="#313231"/>
<rect x="848.95" y="233.7" width="1.7" height="18.6" fill="#313231"/>
<rect x="630" y="233.3" width="220.2" height="1.3" fill="#151515"/>
<rect x="629.55" y="256.5" width="1.7" height="18.6" fill="#313231"/>
<rect x="636.88" y="256.5" width="1.7" height="18.6" fill="#313231"/>
<rect x="644.21" y="256.5" width="1.7" height="18.6" fill="#313231"/>
<rect x="651.54" y="256.5" width="1.7" height="18.6" fill="#313231"/>
<rect x="658.87" y="256.5" width="1.7" height="18.6" fill="#313231"/>
<rect x="666.20" y="256.5" width="1.7" height="18.6" fill="#313231"/>
<rect x="673.53" y="256.5" width="1.7" height="18.6" fill="#313231"/>
<rect x="680.86" y="256.5" width="1.7" height="18.6" fill="#313231"/>
<rect x="688.19" y="256.5" width="1.7" height="18.6" fill="#313231"/>
<rect x="695.52" y="256.5" width="1.7" height="18.6" fill="#313231"/>
<rect x="702.85" y="256.5" width="1.7" height="18.6" fill="#313231"/>
<rect x="710.18" y="256.5" width="1.7" height="18.6" fill="#313231"/>
<rect x="717.51" y="256.5" width="1.7" height="18.6" fill="#313231"/>
<rect x="724.84" y="256.5" width="1.7" height="18.6" fill="#313231"/>
<rect x="732.17" y="256.5" width="1.7" height="18.6" fill="#313231"/>
<rect x="739.50" y="256.5" width="1.7" height="18.6" fill="#313231"/>
<rect x="746.83" y="256.5" width="1.7" height="18.6" fill="#313231"/>
<rect x="754.16" y="256.5" width="1.7" height="18.6" fill="#313231"/>
<rect x="761.49" y="256.5" width="1.7" height="18.6" fill="#313231"/>
<rect x="768.82" y="256.5" width="1.7" height="18.6" fill="#313231"/>
<rect x="776.15" y="256.5" width="1.7" height="18.6" fill="#313231"/>
<rect x="783.48" y="256.5" width="1.7" height="18.6" fill="#313231"/>
<rect x="790.81" y="256.5" width="1.7" height="18.6" fill="#313231"/>
<rect x="798.14" y="256.5" width="1.7" height="18.6" fill="#313231"/>
<rect x="805.47" y="256.5" width="1.7" height="18.6" fill="#313231"/>
<rect x="812.80" y="256.5" width="1.7" height="18.6" fill="#313231"/>
<rect x="820.13" y="256.5" width="1.7" height="18.6" fill="#313231"/>
<rect x="827.46" y="256.5" width="1.7" height="18.6" fill="#313231"/>
<rect x="834.79" y="256.5" width="1.7" height="18.6" fill="#313231"/>
<rect x="842.12" y="256.5" width="1.7" height="18.6" fill="#313231"/>
<rect x="848.95" y="256.5" width="1.7" height="18.6" fill="#313231"/>
<rect x="630" y="256.1" width="220.2" height="1.3" fill="#151515"/>
<g shape-rendering="crispEdges">
<rect x="557.7" y="182.6" width="292.5" height="0.9" fill="#222"/>
<rect x="557.7" y="205.9" width="292.5" height="0.9" fill="#222"/>
<rect x="557.7" y="229.1" width="292.5" height="0.9" fill="#222"/>
<rect x="557.7" y="251.9" width="292.5" height="0.9" fill="#222"/>
<rect x="557.7" y="274.7" width="292.5" height="0.9" fill="#222"/>
<rect x="557.7" y="282.1" width="292.5" height="0.7" fill="#444"/>
<rect x="557.4" y="183" width="0.7" height="99.4" fill="#444"/>
<rect x="849.9" y="183" width="0.7" height="99.4" fill="#444"/>
<rect x="703" y="183" width="0.800" height="99.4" fill="#d02a2a"/>
</g>
<text x="556" y="189.2" font-size="4.500" text-anchor="end" fill="#222">80</text>
<text x="556" y="198.6" font-size="4.500" text-anchor="end" fill="#222">40</text>
<rect x="556.300" y="187.3" width="1.400" height="0.500" fill="#444"/><rect x="556.300" y="196.9" width="1.400" height="0.500" fill="#444"/>
<text x="491" y="191.9" font-size="4.800" font-weight="bold" text-anchor="middle" fill="#111" textLength="31.500" lengthAdjust="spacingAndGlyphs">PCNCOMFAA</text>
<text x="498.5" y="197.7" font-size="4.800" font-weight="bold" text-anchor="middle" fill="#111" textLength="63.5" lengthAdjust="spacingAndGlyphs">PCNCOMFAA 06/16 Vía:-14</text>
<rect x="453.9" y="193.9" width="8.400" height="4" fill="#000"/>
<text x="556" y="212.5" font-size="4.500" text-anchor="end" fill="#222">80</text>
<text x="556" y="221.9" font-size="4.500" text-anchor="end" fill="#222">40</text>
<rect x="556.300" y="210.6" width="1.400" height="0.500" fill="#444"/><rect x="556.300" y="220.2" width="1.400" height="0.500" fill="#444"/>
<text x="491" y="215.2" font-size="4.800" font-weight="bold" text-anchor="middle" fill="#111" textLength="31.500" lengthAdjust="spacingAndGlyphs">PCNCOMFAA</text>
<text x="498.5" y="221.0" font-size="4.800" font-weight="bold" text-anchor="middle" fill="#111" textLength="61" lengthAdjust="spacingAndGlyphs">PCNCOMFAA 06/16 Vía:-7</text>
<rect x="455.2" y="217.2" width="8.400" height="4" fill="#000"/>
<text x="556" y="235.7" font-size="4.500" text-anchor="end" fill="#222">80</text>
<text x="556" y="245.1" font-size="4.500" text-anchor="end" fill="#222">40</text>
<rect x="556.300" y="233.8" width="1.400" height="0.500" fill="#444"/><rect x="556.300" y="243.4" width="1.400" height="0.500" fill="#444"/>
<text x="491" y="238.4" font-size="4.800" font-weight="bold" text-anchor="middle" fill="#111" textLength="31.500" lengthAdjust="spacingAndGlyphs">PCNCOMFAA</text>
<text x="498.5" y="244.2" font-size="4.800" font-weight="bold" text-anchor="middle" fill="#111" textLength="59" lengthAdjust="spacingAndGlyphs">PCNCOMFAA 06/16 Vía:7</text>
<rect x="456.2" y="240.4" width="8.400" height="4" fill="#000"/>
<text x="556" y="258.5" font-size="4.500" text-anchor="end" fill="#222">80</text>
<text x="556" y="267.9" font-size="4.500" text-anchor="end" fill="#222">40</text>
<rect x="556.300" y="256.6" width="1.400" height="0.500" fill="#444"/><rect x="556.300" y="266.2" width="1.400" height="0.500" fill="#444"/>
<text x="491" y="261.2" font-size="4.800" font-weight="bold" text-anchor="middle" fill="#111" textLength="31.500" lengthAdjust="spacingAndGlyphs">PCNCOMFAA</text>
<text x="498.5" y="267.0" font-size="4.800" font-weight="bold" text-anchor="middle" fill="#111" textLength="62" lengthAdjust="spacingAndGlyphs">PCNCOMFAA 06/16 Vía:14</text>
<rect x="454.7" y="263.2" width="8.400" height="4" fill="#000"/>
<text x="489.600" y="278.200" font-size="5" font-weight="bold" text-anchor="middle" fill="#111" textLength="53" lengthAdjust="spacingAndGlyphs">Distancia Kilometrica</text>
<text x="489.600" y="285" font-size="5" font-weight="bold" text-anchor="middle" fill="#111" textLength="28" lengthAdjust="spacingAndGlyphs">Incidencias</text>
<text x="660.0" y="287.300" font-size="4.500" text-anchor="middle" fill="#222">2</text>
<text x="689.3" y="287.300" font-size="4.500" text-anchor="middle" fill="#222">3</text>
<text x="718.6" y="287.300" font-size="4.500" text-anchor="middle" fill="#222">4</text>
<text x="747.9" y="287.300" font-size="4.500" text-anchor="middle" fill="#222">5</text>
<text x="777.2" y="287.300" font-size="4.500" text-anchor="middle" fill="#222">6</text>
<text x="806.5" y="287.300" font-size="4.500" text-anchor="middle" fill="#222">7</text>
<text x="835.8" y="287.300" font-size="4.500" text-anchor="middle" fill="#222">8</text>
<rect x="440.5" y="294.5" width="429" height="121.5" fill="#dce8f7"/>
<rect x="440.5" y="294.5" width="429" height="0.7" fill="#b7c9e3"/>
<text x="451.9" y="302.3" font-size="6.0" fill="#5a7bb5" textLength="28.2" lengthAdjust="spacingAndGlyphs">ISO fricción</text>
<rect x="441.700" y="305.800" width="426.800" height="108.400" fill="#fff" stroke="#a9bfdf" stroke-width="0.700"/>
<g fill="none" stroke="#9aa5b8" stroke-width="0.5"><rect x="444.600" y="297.600" width="5.400" height="5.400"/><path d="M444.600 299.400h5.400M444.600 301.200h5.400M446.400 297.600v5.400M448.200 297.600v5.400"/></g>
<g fill="#fff" stroke="#5a6274" stroke-width="0.75">
<rect x="831.60" y="300.40" width="4.4" height="2.1" rx="0.7"/>
<rect x="845.40" y="298.30" width="5.2" height="4.2" rx="0.8"/><rect x="846.90" y="299.80" width="2.2" height="1.2" fill="#5a6274" stroke="none"/>
<path d="M859.50 298.30l1.1 0 1.5 1.3 1.5-1.3 1.1 0 0 0.9-1.5 1.3 1.5 1.3 0 0.9-1.1 0-1.5-1.3-1.5 1.3-1.1 0 0-0.9 1.5-1.3-1.5-1.3z" stroke-width="0.6"/>
</g>
<g shape-rendering="crispEdges">
<rect x="483.9" y="310" width="147.3" height="1" fill="#e4e4e4"/>
<rect x="483.9" y="318" width="147.3" height="1" fill="#e4e4e4"/>
<rect x="483.9" y="326" width="147.3" height="1" fill="#e4e4e4"/>
<rect x="483.9" y="329" width="147.3" height="1" fill="#e4e4e4"/>
<rect x="483.9" y="338" width="147.3" height="1" fill="#e4e4e4"/>
<rect x="483.9" y="346" width="147.3" height="1" fill="#e4e4e4"/>
<rect x="483.9" y="349" width="147.3" height="1" fill="#e4e4e4"/>
<rect x="483.9" y="357" width="147.3" height="1" fill="#e4e4e4"/>
<rect x="483.9" y="365" width="147.3" height="1" fill="#e4e4e4"/>
<rect x="483.9" y="369" width="147.3" height="1" fill="#e4e4e4"/>
<rect x="483.9" y="376" width="147.3" height="1" fill="#e4e4e4"/>
<rect x="483.9" y="384" width="147.3" height="1" fill="#e4e4e4"/>
<rect x="512" y="308" width="1" height="78" fill="#d4d4d4"/>
<rect x="572" y="308" width="1" height="78" fill="#d4d4d4"/>
</g>
<defs>
<clipPath id="fb0"><rect x="631.2" y="308.5" width="222.1" height="19.5"/></clipPath>
<clipPath id="fb1"><rect x="631.2" y="328.0" width="222.1" height="20.0"/></clipPath>
<clipPath id="fb2"><rect x="631.2" y="348.0" width="222.1" height="19.5"/></clipPath>
<clipPath id="fb3"><rect x="631.2" y="367.5" width="222.1" height="18.8"/></clipPath>
</defs>
<g clip-path="url(#fb0)"><rect x="631.2" y="308.5" width="222.1" height="19.5" fill="#ffff33"/>
<rect x="631.2" y="308.5" width="9" height="19.5" fill="#99cc33"/>
<path d="M640.0 328.0L640.0 325.9L641.5 324.0L642.5 324.8L643.6 324.4L645.1 326.0L645.9 323.8L647.0 324.0L647.7 325.0L649.1 325.6L650.8 323.6L651.5 326.2L652.8 323.5L653.8 325.6L655.0 326.2L655.9 325.0L657.1 325.6L658.0 325.6L659.2 325.4L659.9 323.8L661.2 324.4L662.0 328.0Z" fill="#99cc33"/>
<path d="M662.0 328.0L662.0 326.6L663.6 327.4L664.4 326.7L665.9 326.8L666.9 326.9L668.2 326.9L669.0 327.1L670.1 326.8L671.8 326.6L673.1 327.0L674.0 327.4L674.8 327.0L675.8 327.1L677.4 327.0L678.6 327.2L679.4 327.2L680.2 327.0L681.9 326.8L682.8 326.6L684.3 326.8L685.9 326.8L687.4 327.1L689.0 326.6L689.9 326.8L691.3 327.0L692.5 327.0L694.1 327.0L695.7 327.1L697.2 326.6L698.4 326.9L700.0 326.8L701.2 327.3L702.2 326.8L703.1 326.6L704.1 326.6L705.1 326.6L706.5 327.0L707.7 326.9L709.0 327.2L709.9 327.0L711.5 326.9L712.0 328.0Z" fill="#99cc33"/>
<path d="M693.0 308.5L693.0 309.8L694.2 310.0L695.5 310.4L696.3 309.5L697.8 309.8L698.8 311.0L700.0 310.7L701.1 310.4L702.0 310.4L703.6 310.2L705.0 310.5L705.8 310.6L707.1 309.9L707.8 310.8L709.0 310.5L710.5 310.5L712.2 310.0L713.6 310.1L715.3 310.8L716.1 309.6L717.0 310.9L718.1 310.4L719.1 310.2L720.2 310.0L721.5 310.3L723.1 310.5L724.7 310.7L726.4 310.5L727.3 310.8L728.9 310.8L730.2 310.5L731.1 310.7L732.4 309.9L733.2 310.7L734.8 309.6L736.3 310.1L737.2 309.9L738.6 310.8L739.4 310.4L740.2 310.5L741.2 310.8L742.9 310.2L744.5 309.9L745.3 310.4L746.1 309.7L747.2 310.4L748.1 309.5L749.6 309.9L751.3 310.8L752.3 310.1L753.6 310.4L754.9 310.3L756.2 310.9L757.4 310.1L758.8 309.8L759.8 310.9L761.0 310.3L761.7 310.1L763.0 309.5L764.3 310.4L765.1 310.4L766.3 310.5L767.3 310.5L768.8 309.5L769.5 310.5L771.2 309.8L772.3 310.3L773.4 310.0L774.4 310.0L775.7 309.9L776.8 310.6L777.5 310.3L778.9 309.9L779.9 310.7L780.8 309.7L782.0 310.5L782.8 309.9L783.8 310.7L785.0 310.7L785.8 310.0L787.2 310.8L788.3 309.8L789.2 310.2L790.1 310.7L791.6 309.7L792.6 310.7L793.9 310.7L795.0 309.6L796.0 310.6L797.0 310.0L798.1 310.1L799.2 310.8L800.1 309.4L801.7 310.8L803.4 310.1L805.0 310.9L805.9 310.6L807.4 310.4L808.7 309.9L809.7 309.8L810.5 310.3L811.5 310.7L812.3 310.8L813.6 310.8L815.2 310.8L816.5 309.5L817.9 309.7L818.9 310.4L820.2 310.1L821.8 310.4L822.8 309.8L824.4 310.2L825.9 310.0L826.8 310.3L828.3 309.7L829.7 310.8L831.2 310.7L832.0 310.4L833.5 309.5L834.5 309.8L835.7 310.1L836.9 310.6L837.6 309.5L838.5 309.6L839.2 310.9L840.8 309.6L842.0 309.9L843.0 310.0L844.3 310.3L845.4 309.7L846.5 309.6L847.7 310.5L848.8 309.6L849.7 310.0L851.0 310.6L852.1 310.7L853.3 308.5Z" fill="#99cc33"/>
<path d="M640.0 308.5L640.0 309.0L641.3 309.1L642.3 309.1L643.9 309.2L644.8 309.1L646.1 309.0L647.7 309.0L648.9 309.2L650.2 308.9L651.2 309.0L652.0 309.0L653.4 309.0L655.0 309.2L656.2 309.1L657.1 308.8L658.7 308.9L659.6 309.2L661.1 308.8L662.1 308.9L663.1 308.8L664.3 308.9L665.4 308.9L666.2 308.8L667.8 309.1L669.1 308.8L669.9 308.8L670.9 308.8L671.9 308.9L672.8 309.1L674.0 309.0L675.1 309.0L676.5 308.9L677.3 309.0L678.4 309.1L679.2 309.2L680.0 309.0L681.1 308.9L682.7 309.1L683.6 309.0L684.9 308.8L685.7 309.0L687.1 309.0L688.2 309.0L689.2 309.2L690.8 309.0L691.6 309.0L693.0 308.5Z" fill="#99cc33"/>
<path d="M711.0 328.0L711.0 324.6L712.1 323.9L713.3 325.3L714.7 321.8L716.7 322.4L718.0 323.4L719.3 324.8L720.4 324.7L722.5 322.2L724.5 322.3L725.7 324.3L727.5 322.6L729.5 322.0L730.6 323.1L732.4 323.5L733.6 323.6L734.7 321.7L736.7 323.3L738.1 321.8L739.8 322.0L741.8 323.5L743.3 323.1L744.8 324.9L746.2 319.0L747.2 323.9L749.0 322.4L750.6 321.2L752.0 317.9L753.2 321.5L754.4 320.2L755.7 321.9L757.7 322.1L759.3 318.5L760.4 323.8L761.7 319.3L763.4 322.3L764.8 322.7L766.4 323.6L768.2 317.8L770.4 318.9L772.6 323.8L773.9 317.4L775.9 321.1L778.0 319.7L780.0 321.9L781.2 320.9L782.4 321.3L784.6 321.6L785.5 323.6L786.7 318.6L788.1 321.9L789.2 317.2L790.7 322.5L791.8 323.5L792.9 325.7L794.1 326.8L795.7 326.5L797.9 326.7L799.6 315.5L801.0 313.6L802.6 320.3L804.1 322.2L805.6 320.3L807.7 315.0L809.3 326.8L810.6 326.5L811.8 323.1L813.9 323.6L814.9 319.0L816.6 318.6L818.1 319.2L819.9 319.8L821.8 321.5L822.9 323.2L824.9 319.2L827.1 322.5L828.9 314.0L830.7 313.9L832.3 315.5L834.1 319.3L836.3 312.5L837.3 312.3L839.5 315.3L840.5 313.1L841.7 312.4L843.5 323.8L844.6 320.1L846.3 319.4L848.5 322.8L849.4 318.3L850.4 318.6L851.5 319.0L853.3 328.0Z" fill="#99cc33"/>
<rect x="650.3" y="312.0" width="1.0" height="10.5" rx="0.5" fill="#ffa733"/>
<rect x="644.8" y="311.0" width="1.0" height="4.0" rx="0.5" fill="#ffa733"/>
<rect x="661.4" y="310.5" width="11.4" height="15.0" rx="2.0" fill="#ffa733"/>
<rect x="662.2" y="311.5" width="3.2" height="13.1" rx="1.2" fill="#ff3030"/>
<rect x="667.0" y="312.0" width="5.0" height="12.6" rx="1.2" fill="#ff3030"/>
<rect x="678.8" y="310.0" width="20.7" height="15.5" rx="2.2" fill="#ffa733"/>
<rect x="679.6" y="312.0" width="3.8" height="12.5" rx="1.2" fill="#ff3030"/>
<rect x="685.6" y="311.0" width="6.9" height="5.0" rx="1.2" fill="#ff3030"/>
<rect x="685.6" y="313.0" width="3.4" height="12.0" rx="1.0" fill="#ff3030"/>
<rect x="691.0" y="314.0" width="2.0" height="7.0" rx="1.0" fill="#ff3030"/>
<rect x="694.5" y="313.0" width="3.5" height="11.0" rx="1.0" fill="#ff3030"/>
<rect x="701.6" y="314.0" width="1.0" height="11.0" rx="0.5" fill="#ffa733"/>
<rect x="841.0" y="312.0" width="1.2" height="12.0" rx="0.5" fill="#ffa733"/>
<rect x="845.5" y="311.5" width="3.5" height="3.0" rx="0.6" fill="#ffa733"/>
<rect x="851.3" y="312.0" width="2.0" height="10.0" rx="0.6" fill="#ffa733"/>
<rect x="846.5" y="312.2" width="1.5" height="1.6" rx="0.5" fill="#ff3030"/>
</g>
<g clip-path="url(#fb1)"><rect x="631.2" y="328.0" width="222.1" height="20.0" fill="#ffff33"/>
<rect x="635.3" y="338.0" width="1.1" height="6.5" rx="0.5" fill="#99cc33"/>
<rect x="644.5" y="340.0" width="1.1" height="7.0" rx="0.5" fill="#99cc33"/>
<rect x="677.5" y="341.0" width="1.1" height="6.0" rx="0.5" fill="#99cc33"/>
<rect x="679.8" y="342.0" width="1.1" height="5.0" rx="0.5" fill="#99cc33"/>
<rect x="704.3" y="341.0" width="1.1" height="6.0" rx="0.5" fill="#99cc33"/>
<rect x="792.5" y="331.5" width="1.1" height="3.5" rx="0.5" fill="#99cc33"/>
<rect x="801.5" y="340.0" width="1.1" height="7.0" rx="0.5" fill="#99cc33"/>
<rect x="805.5" y="339.5" width="1.1" height="7.5" rx="0.5" fill="#99cc33"/>
<rect x="803.5" y="343.0" width="1.1" height="4.0" rx="0.5" fill="#99cc33"/>
<rect x="646.8" y="341.5" width="1.1" height="2.5" rx="0.5" fill="#99cc33"/>
<path d="M714.0 348.0L714.0 346.6L715.4 346.4L717.1 346.4L718.7 347.3L719.8 346.2L721.2 346.2L722.0 346.7L723.0 346.6L724.2 347.3L725.2 347.0L726.8 346.4L727.6 346.4L728.5 346.6L729.3 347.3L730.9 347.0L731.8 346.1L733.4 346.9L735.0 346.7L736.4 347.0L738.0 348.0Z" fill="#99cc33"/>
<path d="M746.0 348.0L746.0 346.4L747.5 346.7L748.5 347.3L749.8 346.7L751.3 346.8L752.0 348.0Z" fill="#99cc33"/>
<path d="M766.0 348.0L766.0 346.8L766.9 346.4L767.7 346.6L768.7 347.2L769.9 347.2L771.1 347.1L771.9 346.7L773.4 347.1L774.3 346.4L776.0 346.5L777.1 346.0L777.8 346.1L778.8 347.0L779.7 346.8L781.2 347.0L782.4 346.4L783.0 348.0Z" fill="#99cc33"/>
<path d="M822.0 348.0L822.0 346.9L823.6 347.1L825.0 347.1L826.0 346.0L826.9 346.4L828.0 348.0Z" fill="#99cc33"/>
<path d="M640.0 348.0L640.0 347.5L641.1 347.7L642.6 347.7L643.8 347.3L644.6 347.5L645.9 347.7L647.0 347.4L648.2 347.4L649.1 347.6L649.9 347.5L651.5 347.5L652.9 347.6L654.4 347.7L655.4 347.4L656.8 347.5L657.6 347.6L658.5 347.6L660.0 347.6L661.6 347.3L662.4 347.6L663.6 347.7L664.7 347.3L665.5 347.5L666.4 347.5L667.9 347.6L668.7 347.7L669.9 347.7L670.7 347.5L672.3 347.5L673.4 347.4L674.2 347.5L675.1 347.5L676.7 347.7L678.0 347.5L678.9 347.6L680.5 347.3L681.4 347.4L683.0 347.6L684.3 347.7L685.4 347.4L686.7 347.4L687.5 347.6L689.0 347.5L690.2 347.5L691.8 347.5L692.6 347.4L693.6 347.5L694.5 347.5L695.6 347.7L696.9 347.7L698.4 347.7L699.8 347.4L700.0 348.0Z" fill="#99cc33"/>
<rect x="660.6" y="337.8" width="7.2" height="10.2" rx="2.6" fill="#ffa733"/>
<rect x="661.4" y="338.8" width="5.6" height="9.2" rx="2.2" fill="#ff3030"/>
<rect x="651.5" y="329.0" width="0.9" height="4.5" rx="0.4" fill="#ffa733"/>
<rect x="686.4" y="331.0" width="0.9" height="6.0" rx="0.4" fill="#ffa733"/>
<rect x="709.0" y="340.0" width="1.0" height="7.0" rx="0.4" fill="#ffa733"/>
<rect x="709.2" y="343.0" width="0.7" height="3.0" rx="0.3" fill="#ff3030"/>
<rect x="843.0" y="333.0" width="1.0" height="4.0" rx="0.4" fill="#ffa733"/>
<rect x="845.5" y="333.0" width="3.5" height="1.2" rx="0.4" fill="#ffa733"/>
</g>
<g clip-path="url(#fb2)"><rect x="631.2" y="348.0" width="222.1" height="19.5" fill="#ffff33"/>
<rect x="660.6" y="357.5" width="1.0" height="8.0" rx="0.4" fill="#ffa733"/>
<rect x="673.5" y="358.5" width="1.1" height="7.5" rx="0.4" fill="#ffa733"/>
<rect x="705.8" y="348.7" width="1.2" height="17.3" rx="0.5" fill="#ffa733"/>
<rect x="706.1" y="356.0" width="0.7" height="6.0" rx="0.3" fill="#ff3030"/>
<rect x="648.0" y="362.0" width="1.0" height="4.0" rx="0.4" fill="#ffa733"/>
</g>
<g clip-path="url(#fb3)"><rect x="631.2" y="367.5" width="222.1" height="18.8" fill="#99cc33"/>
<path d="M635 386.300L636.500 382L638 383.500L639 386.300Z" fill="#ffff33"/>
<path d="M655.500 386.300L657 383.500L658.500 386.300Z" fill="#ffff33"/>
<path d="M694.500 386.300L697 376L698.500 369.500L700 376L702 386.300Z" fill="#ffff33"/>
<rect x="703" y="367.5" width="47" height="18.8" fill="#ffff33"/>
<path d="M703.0 367.5L703.0 376.3L704.7 377.8L705.8 372.5L707.1 374.7L709.0 378.0L710.6 377.0L712.3 370.2L713.7 370.3L715.7 369.9L717.6 370.0L719.3 370.9L720.7 372.7L721.6 369.9L723.6 377.6L724.6 381.9L726.7 374.0L728.1 374.2L729.4 378.6L730.4 371.0L731.4 369.6L733.3 370.2L734.7 370.8L736.2 370.2L737.1 371.1L739.2 371.1L740.9 369.7L742.2 370.4L743.9 369.1L745.1 372.8L746.6 375.2L748.1 371.0L750.0 373.1L750.0 367.5Z" fill="#99cc33"/>
<rect x="707.5" y="378.0" width="2.0" height="8.3" rx="0.6" fill="#99cc33"/>
<rect x="716.5" y="380.0" width="1.7" height="6.3" rx="0.6" fill="#99cc33"/>
<path d="M750 386.300V380L753 378.500L756 381L757 386.300Z" fill="#ffff33"/>
<path d="M760.500 386.300L761 379L764 377.500L768 378.500L772 379.500L772.500 386.300Z" fill="#ffff33"/>
<rect x="763.0" y="381.0" width="2.0" height="4.0" rx="0.5" fill="#99cc33"/>
<path d="M772 367.5L773.500 374L775 367.5Z" fill="#ffff33"/>
<path d="M794.500 367.5L795.500 375L797.500 376.500L799.500 367.5Z" fill="#ffff33"/>
<path d="M742 367.5L743 372L744.500 367.5Z" fill="#ffff33"/>
<path d="M811 386.300V372L813 369.200H851V386.300Z" fill="#ffff33"/>
<path d="M813.0 367.5L813.0 368.5L814.4 369.3L816.0 368.8L817.0 369.4L818.3 368.8L819.7 369.0L821.2 368.6L822.1 369.7L823.2 368.8L824.7 369.3L825.5 369.2L826.9 368.6L828.2 368.6L829.3 368.5L830.2 369.8L831.3 369.8L832.4 369.3L834.0 369.4L834.8 369.2L836.2 368.6L837.0 369.6L838.2 368.7L839.3 368.7L840.8 369.1L841.6 369.6L842.4 368.8L843.2 369.4L844.0 369.1L844.8 369.1L846.2 369.2L847.4 369.1L848.5 369.2L849.3 369.1L850.3 369.6L851.0 367.5Z" fill="#99cc33"/>
<rect x="823.3" y="372.0" width="2.1" height="7.5" rx="0.9" fill="#ff3030"/>
<rect x="846.0" y="369.5" width="2.8" height="12.0" rx="1.2" fill="#ff3030"/>
<path d="M826.500 383.500L830 379.500L834 382L838 378L841 383.500Z" fill="#ffa733"/>
<path d="M843 383.500L845.500 377L847.500 383.500Z" fill="#ffa733"/>
<rect x="813.0" y="380.0" width="3.0" height="6.3" rx="0.6" fill="#99cc33"/>
</g>
<rect x="690.0" y="308.500" width="0.600" height="78" fill="#000" opacity="0.100"/>
<rect x="749.0" y="308.500" width="0.600" height="78" fill="#000" opacity="0.100"/>
<rect x="808.0" y="308.500" width="0.600" height="78" fill="#000" opacity="0.100"/>
<g shape-rendering="crispEdges">
<rect x="483.9" y="327" width="147.3" height="1" fill="#666"/>
<rect x="631.2" y="327.50" width="222.1" height="1" fill="#eceedd" shape-rendering="auto"/>
<rect x="483.9" y="347" width="147.3" height="1" fill="#666"/>
<rect x="631.2" y="347.50" width="222.1" height="1" fill="#eceedd" shape-rendering="auto"/>
<rect x="483.9" y="366" width="147.3" height="1" fill="#666"/>
<rect x="631.2" y="367.00" width="222.1" height="1" fill="#eceedd" shape-rendering="auto"/>
<rect x="483.9" y="386" width="147.3" height="1" fill="#777"/>
<rect x="483" y="308" width="1" height="79" fill="#777"/>
<rect x="668.200" y="308.500" width="1" height="78" fill="#000"/>
</g>
<text x="481.500" y="312.2" font-size="5.200" text-anchor="end" fill="#222">-5 m.</text>
<text x="481.500" y="320.1" font-size="5.200" text-anchor="end" fill="#222">0 m.</text>
<text x="481.500" y="328.4" font-size="5.200" text-anchor="end" fill="#222">5 m.</text>
<text x="481.500" y="331.8" font-size="5.200" text-anchor="end" fill="#222">-5 m.</text>
<text x="481.500" y="339.8" font-size="5.200" text-anchor="end" fill="#222">0 m.</text>
<text x="481.500" y="348.4" font-size="5.200" text-anchor="end" fill="#222">5 m.</text>
<text x="481.500" y="351.8" font-size="5.200" text-anchor="end" fill="#222">-5 m.</text>
<text x="481.500" y="359.6" font-size="5.200" text-anchor="end" fill="#222">0 m.</text>
<text x="481.500" y="367.9" font-size="5.200" text-anchor="end" fill="#222">5 m.</text>
<text x="481.500" y="371.2" font-size="5.200" text-anchor="end" fill="#222">-5 m.</text>
<text x="481.500" y="378.7" font-size="5.200" text-anchor="end" fill="#222">0 m.</text>
<text x="481.500" y="386.8" font-size="5.200" text-anchor="end" fill="#222">5 m.</text>
<text x="632" y="393.600" font-size="5.600" text-anchor="middle" fill="#222" textLength="10.8" lengthAdjust="spacingAndGlyphs">0 m.</text>
<text x="691.5" y="393.600" font-size="5.600" text-anchor="middle" fill="#222" textLength="17.7" lengthAdjust="spacingAndGlyphs">400 m.</text>
<text x="750.5" y="393.600" font-size="5.600" text-anchor="middle" fill="#222" textLength="17.7" lengthAdjust="spacingAndGlyphs">800 m.</text>
<text x="810" y="393.600" font-size="5.600" text-anchor="middle" fill="#222" textLength="22.7" lengthAdjust="spacingAndGlyphs">1.200 m.</text>
<text transform="translate(462.300 333.0) rotate(-90)" font-size="5.200" font-weight="bold" text-anchor="middle" fill="#000" textLength="50" lengthAdjust="spacingAndGlyphs">Fricción[mc] (SN@65) [ % ]</text>
<text transform="translate(462.300 346.5) rotate(-90)" font-size="5.200" font-weight="bold" text-anchor="middle" fill="#000" textLength="50" lengthAdjust="spacingAndGlyphs">Fricción[mc] (SN@65) [ % ]</text>
<text transform="translate(462.300 360.0) rotate(-90)" font-size="5.200" font-weight="bold" text-anchor="middle" fill="#000" textLength="50" lengthAdjust="spacingAndGlyphs">Fricción[mc] (SN@65) [ % ]</text>
<text transform="translate(462.300 373.0) rotate(-90)" font-size="5.200" font-weight="bold" text-anchor="middle" fill="#000" textLength="50" lengthAdjust="spacingAndGlyphs">Fricción[mc] (SN@65) [ % ]</text>
<rect x="596.5" y="399" width="8" height="5.400" fill="#ff2020"/><text x="606.0" y="403.800" font-size="5.500" fill="#222" textLength="16.4" lengthAdjust="spacingAndGlyphs">0-0,42</text>
<rect x="627" y="399" width="8" height="5.400" fill="#ffa020"/><text x="636.5" y="403.800" font-size="5.500" fill="#222" textLength="24.4" lengthAdjust="spacingAndGlyphs">0,42-0,52</text>
<rect x="665.5" y="399" width="8" height="5.400" fill="#ffff20"/><text x="675.0" y="403.800" font-size="5.500" fill="#222" textLength="24.5" lengthAdjust="spacingAndGlyphs">0,52-0,72</text>
<rect x="704.5" y="399" width="8" height="5.400" fill="#90cc20"/><text x="714.0" y="403.800" font-size="5.500" fill="#222" textLength="15.9" lengthAdjust="spacingAndGlyphs">&gt; 0,72</text>
<rect x="855.800" y="306.200" width="12.400" height="107.600" fill="#d0def1"/><rect x="855.500" y="306.200" width="0.600" height="107.600" fill="#b4c7e3"/>
<rect x="856.500" y="308" width="10.800" height="30.100" fill="#c8d9f1" stroke="#a4badc" stroke-width="0.600"/>
<text transform="translate(860.100 323.400) rotate(90)" font-size="5.300" font-weight="bold" text-anchor="middle" fill="#1e2f5e" textLength="25.500" lengthAdjust="spacingAndGlyphs">Estadísticas</text>
</svg></body></html>
